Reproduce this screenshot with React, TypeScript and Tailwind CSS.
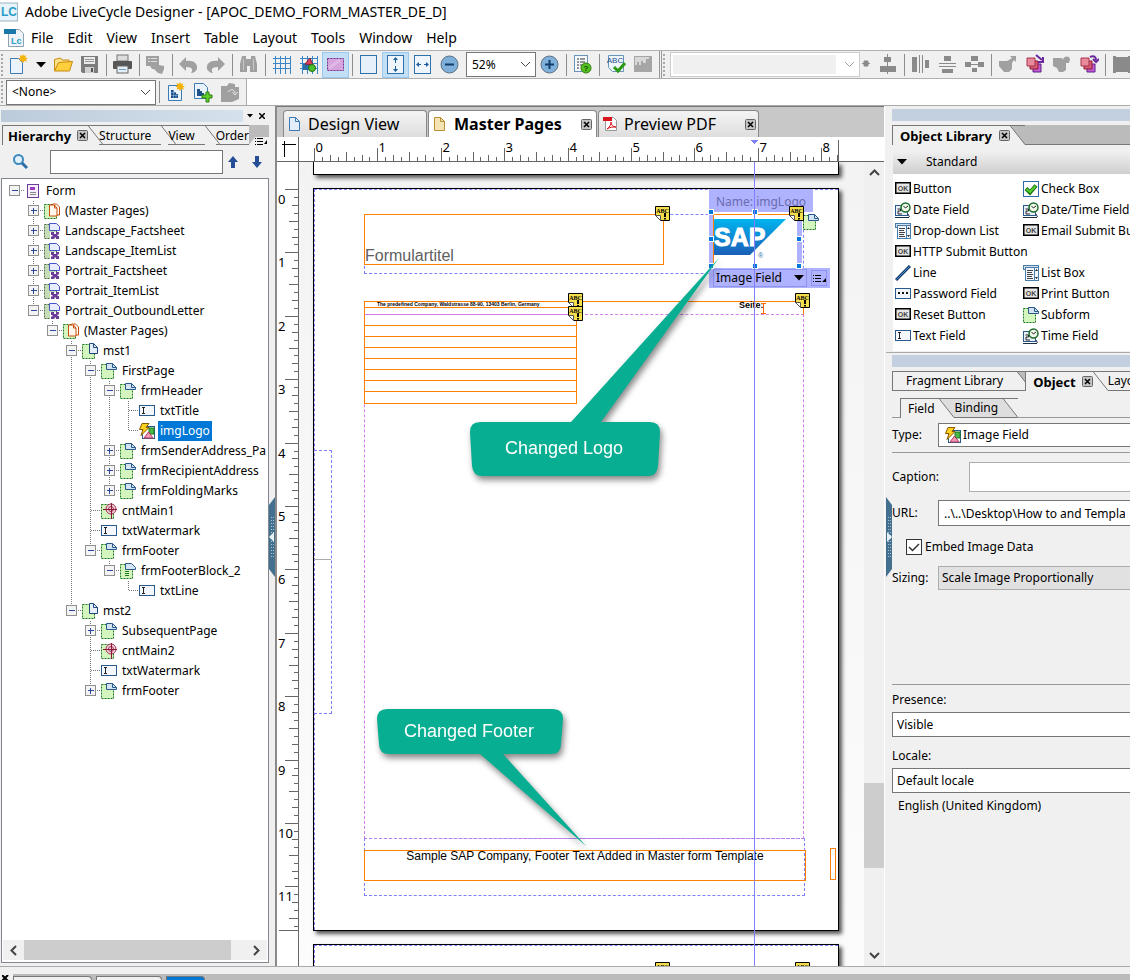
import type { ReactNode } from 'react';
import clsx from 'clsx';

type TreeNode = { name: string; icon: string; closed?: boolean; selected?: boolean; children?: TreeNode[] };

const tree: TreeNode[] = [
  {
    name: 'Form',
    icon: 'form',
    children: [
      { name: '(Master Pages)', icon: 'masters', closed: true },
      { name: 'Landscape_Factsheet', icon: 'flow', closed: true },
      { name: 'Landscape_ItemList', icon: 'flow', closed: true },
      { name: 'Portrait_Factsheet', icon: 'flow', closed: true },
      { name: 'Portrait_ItemList', icon: 'flow', closed: true },
      {
        name: 'Portrait_OutboundLetter',
        icon: 'flow',
        children: [
          {
            name: '(Master Pages)',
            icon: 'masters',
            children: [
              {
                name: 'mst1',
                icon: 'page',
                children: [
                  {
                    name: 'FirstPage',
                    icon: 'subform',
                    children: [
                      {
                        name: 'frmHeader',
                        icon: 'subform',
                        children: [
                          { name: 'txtTitle', icon: 'text' },
                          { name: 'imgLogo', icon: 'image', selected: true },
                        ],
                      },
                      { name: 'frmSenderAddress_Pa', icon: 'subform', closed: true },
                      { name: 'frmRecipientAddress', icon: 'subform', closed: true },
                      { name: 'frmFoldingMarks', icon: 'subform', closed: true },
                    ],
                  },
                  { name: 'cntMain1', icon: 'content' },
                  { name: 'txtWatermark', icon: 'text' },
                  {
                    name: 'frmFooter',
                    icon: 'subform',
                    children: [
                      {
                        name: 'frmFooterBlock_2',
                        icon: 'subformRows',
                        children: [{ name: 'txtLine', icon: 'text' }],
                      },
                    ],
                  },
                ],
              },
              {
                name: 'mst2',
                icon: 'page',
                children: [
                  { name: 'SubsequentPage', icon: 'subform', closed: true },
                  { name: 'cntMain2', icon: 'content' },
                  { name: 'txtWatermark', icon: 'text' },
                  { name: 'frmFooter', icon: 'subform', closed: true },
                ],
              },
            ],
          },
        ],
      },
    ],
  },
];

type Row = { node: TreeNode; guides: boolean[]; last: boolean };

function flatten(nodes: TreeNode[], guides: boolean[] = []): Row[] {
  return nodes.flatMap((node, i) => {
    const last = i === nodes.length - 1;
    return [{ node, guides, last }, ...flatten(node.children ?? [], [...guides, !last])];
  });
}

const library = [
  ['Button', 'ok'],
  ['Check Box', 'check'],
  ['Date Field', 'date'],
  ['Date/Time Field', 'date'],
  ['Drop-down List', 'list'],
  ['Email Submit Button', 'ok'],
  ['HTTP Submit Button', 'ok'],
  ['Line', 'line'],
  ['List Box', 'list'],
  ['Password Field', 'password'],
  ['Print Button', 'ok'],
  ['Reset Button', 'ok'],
  ['Subform', 'subform'],
  ['Text Field', 'text'],
  ['Time Field', 'date'],
];

const menus = ['File', 'Edit', 'View', 'Insert', 'Table', 'Layout', 'Tools', 'Window', 'Help'];

function Glyph({ name }: { name: string }) {
  return (
    <svg width="16" height="16" viewBox="0 0 16 16" className="shrink-0" fill="none">
      {glyphs[name]}
    </svg>
  );
}

const greenBox = (
  <rect x="0.5" y="1.5" width="12" height="14" fill="#d5f5bf" stroke="#1f7a1f" strokeDasharray="2 1" />
);
const bluePage = <path d="M5.500 .5h6l4 4v2h-10z" fill="#d3e3f3" stroke="#2a5a8c" />;

const glyphs: Record<string, ReactNode> = {
  form: (
    <>
      <rect x="2.5" y="1.5" width="11" height="13" fill="#f6effa" stroke="#6a3d96" />
      <rect x="5" y="4" width="5" height="3" fill="#9b3cc4" />
      <path d="M5 9.500h6M5 11.500h6" stroke="#888" />
    </>
  ),
  masters: (
    <>
      {greenBox}
      <path d="M8.500 1h4l3 3v8h-7z" fill="#fff" stroke="#c8500a" />
      <path d="M5.500 2h5l2.500 3v8h-7.500z" fill="#fff6ee" stroke="#c8500a" />
      <path d="M10.500 2v3h2.500" stroke="#c8500a" />
    </>
  ),
  flow: (
    <>
      <rect x="0.5" y="1.5" width="12" height="14" fill="#c5dcb6" stroke="#4c6a4c" strokeDasharray="2 1" />
      <path d="M5.500 .5h7l3 3v4h-10z" fill="#e8eeff" stroke="#4455c8" />
      <path d="M6 9h10v7H6z" fill="#fff" />
      <path d="M7 9h3v2h2V9h3v2.500h-1.500V13H15v3h-3v-1.500h-1.500V16H7v-2.500h1.500V12H7z" fill="#6b3c96" />
      <path d="M9 11h4v3H9z" fill="#6b3c96" />
    </>
  ),
  page: (
    <>
      {greenBox}
      <path d="M7.500 .5h4l4 4v6h-8z" fill="#e6eefa" stroke="#1f4a7c" />
      <path d="M11.500 .5v4h4" stroke="#1f4a7c" />
    </>
  ),
  subform: (
    <>
      {greenBox}
      {bluePage}
      <path d="M11.500 .5v4h4" stroke="#2a5a8c" />
    </>
  ),
  subformRows: (
    <>
      {greenBox}
      {bluePage}
      <path d="M5 8.500h4M5 10.500h4M5 12.500h4" stroke="#1f7a1f" />
    </>
  ),
  text: (
    <>
      <rect x="0.5" y="2.5" width="15" height="10" fill="#f4f8fc" stroke="#2a5a8c" />
      <path d="M4.500 4.500v6M3 4.500h3M3 10.500h3" stroke="#222" />
    </>
  ),
  image: (
    <>
      <rect x="3.5" y="3.5" width="12" height="12" fill="#fff" stroke="#2a5a8c" />
      <rect x="10" y="5" width="5" height="6" fill="#49b849" stroke="#1f7a1f" />
      <path d="M9.500 9l4.500 6H5z" fill="#f09ab4" stroke="#b33a5c" />
      <path d="M3 .5h7l-3 4h3l-8 8 2-6H.5z" fill="#ffd21f" stroke="#8a5a00" />
    </>
  ),
  content: (
    <>
      {greenBox}
      <circle cx="10" cy="6" r="5" fill="#f3d6de" stroke="#a03050" />
      <circle cx="10" cy="6" r="2.500" stroke="#a03050" />
      <path d="M10.500 0v16M2 6.500h14" stroke="#8a1838" />
    </>
  ),
  ok: (
    <>
      <rect x="0.75" y="1.75" width="14.500" height="10.500" fill="#e6e6e6" stroke="#000" strokeWidth="1.500" />
      <text x="8" y="10" textAnchor="middle" fontSize="7" fontWeight="bold" fill="#444" fontFamily="Liberation Sans, sans-serif">
        OK
      </text>
    </>
  ),
  check: (
    <>
      <rect x="0.5" y="0.5" width="15" height="15" fill="#fff" stroke="#2f6aa8" />
      <path d="M3 7.500l4 4 6-7" stroke="#176b10" strokeWidth="4" />
      <path d="M3.500 8l3.500 3 5.500-6" stroke="#55d02e" strokeWidth="2" />
    </>
  ),
  date: (
    <>
      <rect x="0.5" y="3.500" width="12" height="10" fill="#e8f1f8" stroke="#2a5a8c" />
      <path d="M0 15.500h14M13 12l1.500 3" stroke="#1b2f44" />
      <path d="M2.500 7h3v2H3v3h4" stroke="#222" />
      <circle cx="10.500" cy="5.500" r="4.500" fill="#eef7ea" stroke="#1f6a2c" strokeWidth="1.500" />
      <path d="M8.500 4l2 2 2.500-2" stroke="#222" />
    </>
  ),
  list: (
    <>
      <rect x="0.5" y="0.5" width="15" height="4" fill="#cfe0f0" stroke="#4a7cab" />
      <rect x="2.500" y="2.500" width="13" height="13" fill="#f1f6fb" stroke="#4a7cab" />
      <path d="M4 5.500h6M4 7.500h5M4 9.500h6M4 11.500h5M4 13.500h6" stroke="#444" />
      <path d="M11.500 2v13" stroke="#4a7cab" />
      <path d="M12 6l1.500-2L15 6zM12 12l1.500 2 1.500-2z" fill="#222" />
    </>
  ),
  line: (
    <>
      <path d="M1 15L15 1" stroke="#173a66" strokeWidth="3" />
      <path d="M1.500 14.500L14.500 1.500" stroke="#3f8fd6" />
    </>
  ),
  password: (
    <>
      <rect x="0.5" y="2.500" width="15" height="10" fill="#f1f6fb" stroke="#2a5a8c" />
      <path d="M3 6h2v2H3zM7 6h2v2H7zM11 6h2v2h-2z" fill="#111" />
    </>
  ),
};

const sun = <path d="M15 0l1 2 2-1-.5 2.500L20 4.500l-2 1 1 2-2.500-.5L15 9l-1-2-2.500.5 1-2-2-1 2-1-1-2.500 2.500 1z" fill="#f5b30a" />;

const tools: Record<string, ReactNode> = {
  newDoc: (
    <>
      <path d="M2.500 4.500h8l4 4v11h-12z" fill="#eaf2fb" stroke="#3b7ab5" />
      {sun}
    </>
  ),
  open: (
    <>
      <path d="M2.500 17V5.500l6-1.500 1.500 2h7v3" fill="#ffe48a" stroke="#c88a10" />
      <path d="M2.500 17l4-8.500 14-1-3 9.500z" fill="#ffcf3d" stroke="#c88a10" />
    </>
  ),
  save: (
    <>
      <path d="M2 2h17v17H3.500L2 17.500z" fill="#7c7c7c" />
      <rect x="5" y="3" width="11" height="7" fill="#e8e8e8" />
      <path d="M6 5.500h9M6 7.500h9" stroke="#999" />
      <rect x="6" y="13" width="9" height="6" fill="#d0d0d0" />
      <rect x="12" y="14" width="2" height="4" fill="#555" />
    </>
  ),
  print: (
    <>
      <rect x="5" y="1" width="11" height="6" fill="#dcdcdc" stroke="#777" />
      <rect x="1" y="7" width="19" height="8" rx="1" fill="#565656" />
      <rect x="5" y="12" width="11" height="7" fill="#e6eef5" stroke="#666" />
      <path d="M7 15.500h7" stroke="#6da0c8" />
    </>
  ),
  cut: (
    <>
      <path d="M1 2h13v9l5 1v3l-2 5-4-1-4-4H7l-2-3H1z" fill="#a0a0a0" />
      <path d="M3 4.500h2M6 4.500h6M3 7.500h2M6 7.500h6" stroke="#e0e0e0" />
    </>
  ),
  undo: <path d="M8 3v4c7-1 12 2 11 8-1 2-3 4-6 4 2-3 2-6-5-6v4L1 10z" fill="#a0a0a0" />,
  redo: <path d="M13 3v4C6 6 1 9 2 15c1 2 3 4 6 4-2-3-2-6 5-6v4l7-7z" fill="#a0a0a0" />,
  find: (
    <>
      <path d="M4 2h4v3h5V2h4l2 8v8h-7v-6H9v6H2v-8z" fill="#a0a0a0" />
      <path d="M5.500 5v11M15.500 5v11" stroke="#c8c8c8" />
    </>
  ),
  grid: <path d="M2 4.500h18M2 9.500h18M2 14.500h18M4.500 2v18M9.500 2v18M14.500 2v18M19.500 2v18" stroke="#3a86c4" />,
  gridShapes: (
    <>
      <path d="M2 4.500h18M2 9.500h18M2 14.500h18M4.500 2v18M9.500 2v18M14.500 2v18M19.500 2v18" stroke="#3a86c4" />
      <rect x="5" y="10" width="6" height="6" fill="#2d6ea8" />
      <path d="M12 4l3 7-8-1z" fill="#d8405c" stroke="#8c1c34" />
      <circle cx="14" cy="14" r="3.500" fill="#49c02c" stroke="#1c7010" />
    </>
  ),
  select: (
    <>
      <rect x="2.500" y="4.500" width="16" height="12" fill="#d6a4dc" stroke="#7a2a8c" strokeDasharray="2 1" />
      <path d="M4 14L15 6" stroke="#e0b8e6" strokeWidth="3" />
    </>
  ),
  page: <rect x="2.500" y="1.500" width="16" height="18" fill="#e6f0fa" stroke="#2f72ab" />,
  fitPage: (
    <>
      <rect x="2.500" y="1.500" width="16" height="18" fill="#eef5fc" stroke="#2f72ab" />
      <path d="M10.500 4v5M10.500 12v5" stroke="#1d5fa0" />
      <path d="M8 6l2.500-3L13 6zM8 15l2.500 3 2.500-3z" fill="#1d5fa0" />
    </>
  ),
  fitWidth: (
    <>
      <rect x="2.500" y="1.500" width="16" height="18" fill="#eef5fc" stroke="#2f72ab" />
      <path d="M5 10.500h4M12 10.500h4" stroke="#1d5fa0" />
      <path d="M7 8l-3 2.500L7 13zM14 8l3 2.500-3 2.500z" fill="#1d5fa0" />
    </>
  ),
  zoomOut: (
    <>
      <circle cx="10.500" cy="10.500" r="8.500" fill="#7fb0da" stroke="#5c6f80" />
      <path d="M6 10.500h9" stroke="#123d6b" strokeWidth="2" />
    </>
  ),
  zoomIn: (
    <>
      <circle cx="10.500" cy="10.500" r="8.500" fill="#7fb0da" stroke="#5c6f80" />
      <path d="M6 10.500h9M10.500 6v9" stroke="#123d6b" strokeWidth="2" />
    </>
  ),
  report: (
    <>
      <rect x="2.500" y="1.500" width="13" height="16" fill="#f4f8fc" stroke="#6a93b8" />
      <path d="M5 5h2M8 5h5M5 8h2M8 8h5M5 11h2M8 11h3M5 14h2" stroke="#333" />
      <circle cx="14" cy="14" r="5" fill="#55c01f" stroke="#2f7d10" />
      <text x="14" y="17" textAnchor="middle" fontSize="8" fontWeight="bold" fill="#0f4a08" fontFamily="Liberation Sans, sans-serif">
        ?
      </text>
    </>
  ),
  spell: (
    <>
      <path d="M3.500 1.500h15v16h-11l-4-4z" fill="#eef5fc" stroke="#6a93b8" />
      <text x="10" y="9" textAnchor="middle" fontSize="8" fill="#1d4f8a" fontFamily="Liberation Sans, sans-serif">
        ABC
      </text>
      <path d="M9 13l4 4 7-8" stroke="#2b9a12" strokeWidth="3" />
    </>
  ),
  chart: (
    <>
      <rect x="2" y="2" width="18" height="16" fill="#a6a6a6" />
      <path d="M3 3h14v2h-3v4h-3V7H9v4H7V8H5v3H3z" fill="#d8d8d8" />
    </>
  ),
  dot: <path d="M1 9.500h8M3 7h4v5H3z" fill="#8a8a8a" stroke="#8a8a8a" />,
  align: <path d="M7 3h7v5H7zM3 12h16v6H3zM10 0h1v20h-1z" fill="#8a8a8a" />,
  spreadH: <path d="M2 3h5v15H2zM9 1h1v18H9zM12 1h1v18h-1zM15 6h4v8h-4z" fill="#8a8a8a" />,
  spreadV: <path d="M7 2h7v5H7zM2 9h17v1H2zM2 12h17v1H2zM5 15h11v4H5z" fill="#8a8a8a" />,
  spreadC: <path d="M7 2h7v5H7zM1 8h6v5H1zM14 8h6v5h-6zM7 10h7v1H7zM8 14h5v4H8z" fill="#8a8a8a" />,
  group: <path d="M2 7h8l2-1 3-2-2-2h6v6l-2-2-2 3v6l-3 3H7l-5-6z" fill="#a0a0a0" />,
  layerBack: (
    <>
      <path d="M9 10h8v8H9z" fill="#c45ad8" stroke="#5c1f86" />
      <path d="M6 7h8v8H6z" fill="#d65a76" stroke="#8c1c34" />
      <path d="M3 4h8v8H3z" fill="#e88a9c" stroke="#a8324c" />
      <path d="M12 1l6 5M19 3v5h-5" stroke="#6a2a9c" strokeWidth="2" />
    </>
  ),
  layerFront: (
    <>
      <path d="M9 10h8v8H9z" fill="#c45ad8" stroke="#5c1f86" />
      <path d="M6 7h8v8H6z" fill="#d65a76" stroke="#8c1c34" />
      <path d="M3 4h8v8H3z" fill="#e88a9c" stroke="#a8324c" />
      <path d="M12 3c4-2 6 0 6 3M15 5l3 3 3-3" stroke="#6a2a9c" strokeWidth="2" />
    </>
  ),
  ungroup: <path d="M2 4h9l1 2c0-4 6-5 7-1l-1 4h-3v7l-3 2H8l-2-4-4-2z" fill="#a0a0a0" />,
  frame: <path d="M2 2h3v1h12V2h3v17h-3v-1H5v1H2z" fill="#8a8a8a" />,
  docGrid: (
    <>
      <path d="M3.500 3.500h9l4 4v11h-13z" fill="#eaf2fb" stroke="#3b7ab5" />
      <path d="M6 8h3v2h2v2h2v4H6z" fill="#1d4f8a" />
      <path d="M8.500 8v8M11 12v4M6 10.500h5M6 13.500h7" stroke="#a9c8e6" strokeWidth="0.500" />
      {sun}
    </>
  ),
  docAdd: (
    <>
      <path d="M2.500 1.500h9l4 4v11h-13z" fill="#eaf2fb" stroke="#3b7ab5" />
      <path d="M5 7h3v2h2v2h2v3H5z" fill="#1d4f8a" />
      <path d="M14 10h3v3h3v3h-3v4h-3v-4h-4v-3h4z" fill="#5fd02a" stroke="#2f7d10" />
    </>
  ),
  docUp: (
    <>
      <path d="M2 4h6l2-3 6 1v3h4v12l-7 3H2z" fill="#a0a0a0" />
      <path d="M9 10c3-4 7-2 7 1M13.500 10l2.500 3 2.500-3" stroke="#e8e8e8" />
    </>
  ),
};

function Tool({ name, on }: { name: string; on?: boolean }) {
  return (
    <button
      aria-label={name}
      className={clsx(
        'flex h-[26px] w-[27px] shrink-0 items-center justify-center',
        on && 'border border-[#99c9ef] bg-[#c2dff5]',
      )}
    >
      <svg width="21" height="21" viewBox="0 0 21 21" fill="none" className="shrink-0">
        {tools[name]}
      </svg>
    </button>
  );
}

function Sep() {
  return <span className="ml-[3px] mr-0.5 h-[22px] w-px shrink-0 bg-[#8c8c8c]" />;
}

function Grip() {
  return <span className="ml-px mr-0.5 h-[22px] w-[2px] shrink-0 border-l-2 border-dotted border-[#a8a8a8]" />;
}

function Chevron({ className }: { className?: string }) {
  return (
    <svg width="11" height="7" viewBox="0 0 11 7" fill="none" stroke="#444" className={clsx('pointer-events-none shrink-0', className)}>
      <path d="M1 1l4.500 4.500L10 1" />
    </svg>
  );
}

function Triangle() {
  return (
    <svg width="10" height="6" viewBox="0 0 10 6" className="shrink-0">
      <path d="M0 0h10L5 5.500z" fill="#000" />
    </svg>
  );
}

function CloseBox() {
  return (
    <svg width="11" height="11" viewBox="0 0 11 11" className="shrink-0">
      <rect x="0.5" y="0.5" width="10" height="10" rx="1" fill="#c4c4c4" stroke="#666" />
      <path d="M3 3l5 5M8 3L3 8" stroke="#000" strokeWidth="1.500" />
    </svg>
  );
}

function Slant({ behind }: { behind?: string }) {
  return (
    <svg width="15" height="20" viewBox="0 0 15 20" className="shrink-0">
      <path d="M0 0h15v20z" className={behind ?? 'fill-[#f0f0f0]'} />
      <path d="M0 .5l15 19M0 .5h15" fill="none" stroke="#777" />
    </svg>
  );
}

function Grab({ className, flip }: { className: string; flip?: boolean }) {
  return (
    <svg width="6" height="80" viewBox="0 0 6 80" className={clsx('absolute top-[391px]', className)}>
      <path d={flip ? 'M0 0l6 8v64l-6 8z' : 'M6 0L0 8v64l6 8z'} fill="#44708f" />
      <path d="M2.500 20v40M4.500 20v40" stroke="#a9c3d6" strokeDasharray="1 2" />
      <path d={flip ? 'M1 35v10l5-5z' : 'M5 35v10l-5-5z'} fill="#e6f0f7" />
    </svg>
  );
}

function Cell({ top, bottom, across, sign }: { top?: boolean; bottom?: boolean; across?: boolean; sign?: string }) {
  return (
    <svg width="19" height="20" viewBox="0 0 19 20" fill="none" className="shrink-0" shapeRendering="crispEdges">
      <g stroke="#777" strokeDasharray="1 1">
        {top && <path d="M9.500 0v10" />}
        {bottom && <path d="M9.500 10v10" />}
        {across && <path d="M9.500 9.500h10" />}
      </g>
      {sign && <rect x="4.500" y="4.500" width="10" height="10" fill="#f4f4f4" stroke="#8f8f8f" />}
      {sign && <path d={sign === '+' ? 'M6.500 9.500h6M9.500 6.500v6' : 'M6.500 9.500h6'} stroke="#2d4a9c" />}
    </svg>
  );
}

function TreeRow({ node, guides, last }: Row) {
  const sign = node.closed ? '+' : node.children ? '-' : undefined;
  return (
    <li className="flex h-5 items-center whitespace-nowrap">
      {guides.map((g, i) => (
        <Cell key={i} top={g} bottom={g} />
      ))}
      <Cell top={guides.length > 0} bottom={!last} across sign={sign} />
      <span className="ml-px flex">
        <Glyph name={node.icon} />
      </span>
      <span className={clsx('ml-[3px] px-0.5 leading-5', node.selected && 'bg-[#0078d7] text-white')}>{node.name}</span>
    </li>
  );
}

function Hierarchy() {
  return (
    <aside className="relative flex w-[277px] shrink-0 flex-col border-r-2 border-[#8a8a8a] pt-0.5">
      <div className="flex h-4 items-center">
        <div className="ml-px h-3 flex-1 bg-linear-to-r from-[#bccbdb] to-[#d5e1ec]" />
        <div className="flex w-8 items-center justify-center gap-1.5 pr-1.5">
          <svg width="6" height="4" viewBox="0 0 6 4">
            <path d="M0 0h6L3 3.500z" />
          </svg>
          <svg width="6" height="6" viewBox="0 0 6 6">
            <path d="M0 0l6 6M6 0L0 6" stroke="#000" strokeWidth="1.500" />
          </svg>
        </div>
      </div>
      <div className="mt-px flex h-5 pl-0.5 pr-1.5">
        <div className="flex min-w-0 flex-1 overflow-hidden">
          <button className="flex items-center gap-1.5 border-l border-t border-[#777] pl-[5px] text-[13px] font-bold">
            Hierarchy <CloseBox />
          </button>
          <Slant />
          <button className="-ml-1 border-y border-[#777] pr-2.5 pt-px">Structure</button>
          <Slant />
          <button className="-ml-2 border-y border-[#777] pr-2.5 pt-px">View</button>
          <Slant />
          <button className="-ml-1 border-y border-[#777] pt-px">Order</button>
        </div>
        <div className="flex w-5 shrink-0 items-end justify-end bg-[#bbb]">
          <svg width="20" height="9" viewBox="0 0 20 9">
            <path d="M0 9l6-8h14v8z" fill="#f0f0f0" />
            <path d="M6 2.500h1M6 5.500h1M6 8.500h1M8 2.500h6M8 5.500h6M8 8.500h6" stroke="#000" />
            <path d="M18 4v4h-3z" />
          </svg>
        </div>
      </div>
      <div className="flex h-[33px] items-center px-3">
        <svg width="17" height="17" viewBox="0 0 17 17" fill="none" className="shrink-0">
          <circle cx="6.500" cy="6.500" r="4.500" fill="#e3f1fa" stroke="#3c8abf" strokeWidth="2" />
          <path d="M10 10l5 5" stroke="#2d6ea8" strokeWidth="3" />
        </svg>
        <input aria-label="Search hierarchy" className="ml-[21px] h-6 w-0 flex-1 border border-[#767676] bg-white px-1" />
        <svg width="12" height="14" viewBox="0 0 12 14" className="ml-1">
          <path d="M6 1l5 6H8v6H4V7H1z" fill="#254e97" />
        </svg>
        <svg width="12" height="14" viewBox="0 0 12 14" className="ml-3">
          <path d="M6 13l5-6H8V1H4v6H1z" fill="#254e97" />
        </svg>
      </div>
      <div className="mb-[3px] ml-px mr-1.5 flex min-h-0 flex-1 flex-col border border-[#828790] bg-white pb-0.5">
        <ul className="min-h-0 flex-1 overflow-hidden pl-[3px] pt-0.5">
          {flatten(tree).map((row, i) => (
            <TreeRow key={i} {...row} />
          ))}
        </ul>
        <div className="mx-px flex h-5 items-center bg-[#f0f0f0]">
          <Chevron className="mx-[5px] rotate-90 stroke-2" />
          <div className="h-full flex-1 bg-[#cdcdcd]" />
          <Chevron className="ml-[20px] mr-[5px] -rotate-90 stroke-2" />
        </div>
      </div>
      <Grab className="right-0" />
    </aside>
  );
}

const INCH = 63.4;

function Ruler({ vertical, start, inches }: { vertical?: boolean; start: number; inches: number }) {
  const count = Math.floor(inches * 8);
  const ticks = Array.from({ length: count + 1 }, (_, i) => ({
    at: Math.round(start + (i * INCH) / 8) + 0.5,
    size: i % 8 === 0 ? 13 : i % 4 === 0 ? 9 : i % 2 === 0 ? 6 : 4,
    label: i % 8 === 0 ? i / 8 : null,
  }));
  const end = Math.round(start + inches * INCH) + 0.5;
  return (
    <svg className="h-full w-full" shapeRendering="crispEdges">
      {ticks.map((t) => (
        <g key={t.at}>
          <path d={vertical ? `M${21 - t.size} ${t.at}h${t.size}` : `M${t.at} ${24 - t.size}v${t.size}`} stroke="#666" />
          {t.label !== null && (
            <text x={vertical ? 1 : t.at + 1} y={vertical ? t.at + 14 : 15} fontSize="13">
              {t.label}
            </text>
          )}
        </g>
      ))}
      <path d={vertical ? `M2 ${end}h19` : `M${end} 3v21`} stroke="#666" />
      {!vertical && <path d="M452 3h7l-3.500 4z" fill="#8080ff" />}
    </svg>
  );
}

function Note({ className }: { className: string }) {
  return (
    <svg width="15" height="15" viewBox="0 0 15 15" className={clsx('absolute', className)}>
      <path d="M.5.5h14v14h-9l-5-5z" fill="#f4de4c" stroke="#000" />
      <path d="M.5 9.500h5v5z" fill="#fff" stroke="#555" />
      <text x="7.500" y="7" textAnchor="middle" fontSize="6" fontWeight="bold" fontFamily="Liberation Serif, serif">
        ABC
      </text>
      <path d="M9 7h2v4H9zM9 12h2v1.500H9z" />
    </svg>
  );
}

function Handle({ className }: { className: string }) {
  return <span className={clsx('absolute size-[6px] border border-white bg-[#0078d7]', className)} />;
}

function Sheet({ className, children }: { className: string; children?: ReactNode }) {
  return (
    <section className={clsx('relative w-[526px] shrink-0 border border-black bg-white shadow-[3px_3px_4px_#555]', className)}>
      {children}
    </section>
  );
}

function ImageSelection() {
  return (
    <>
      <div className="absolute left-[395px] top-0 h-[23px] w-[104px] bg-[#aeb2ff] pl-[7px] pt-1 leading-[18px] text-[#6c6cae]">
        Name: imgLogo
      </div>
      <div className="absolute left-[395px] top-[23px] h-[56px] w-[93px] border-x-[5px] border-[#aeb2ff] bg-white" />
      <div className="absolute left-[399px] top-[25px] h-[51px] w-[84px] border-l border-t border-[#ff8000]" />
      <svg width="76" height="42" viewBox="0 0 76 42" className="absolute left-[400px] top-[29px]">
        <defs>
          <linearGradient id="sap" x1="0" y1="0" x2="0" y2="1">
            <stop offset="0" stopColor="#00b5ef" />
            <stop offset="1" stopColor="#1c5fb8" />
          </linearGradient>
        </defs>
        <path d="M0 1h72L36 37H0z" fill="url(#sap)" />
        <text x="0" y="28" fontSize="25" fontWeight="bold" fill="#fff" stroke="#fff" fontFamily="Liberation Sans, sans-serif">
          SAP
        </text>
        <text x="44" y="40" fontSize="7" fill="#2d6ea8" fontFamily="Liberation Sans, sans-serif">
          ®
        </text>
      </svg>
      <Handle className="left-[394px] top-[20px]" />
      <Handle className="left-[438px] top-[20px]" />
      <Handle className="left-[394px] top-[47px]" />
      <Handle className="left-[482px] top-[47px]" />
      <div className="absolute left-[395px] top-[79px] flex h-[20px] w-[121px] items-center gap-1 bg-[#aeb2ff] pl-1">
        <button className="flex h-[18px] w-[94px] items-center justify-between border border-[#8f93f0] px-0.5">
          Image Field <Triangle />
        </button>
        <button aria-label="Field options" className="flex h-[16px] w-[16px] items-center justify-center border border-[#8f93f0]">
          <svg width="13" height="9" viewBox="0 0 13 9">
            <path d="M0 1.500h1M0 4.500h1M0 7.500h1M2 1.500h6M2 4.500h6M2 7.500h6" stroke="#000" />
            <path d="M13 4v4H9z" />
          </svg>
        </button>
      </div>
      <Handle className="left-[394px] top-[74px]" />
      <Handle className="left-[438px] top-[74px]" />
      <Handle className="left-[482px] top-[74px]" />
      <div className="absolute left-[489px] top-[25px]">
        <Glyph name="subform" />
      </div>
    </>
  );
}

function AddressLines() {
  return (
    <div className="absolute left-[50px] top-[125px] w-[213px] divide-y divide-[#ff8000] border border-[#ff8000] border-t-[#d080e8]">
      {Array.from({ length: 8 }, (_, i) => (
        <div key={i} className="h-[11px]" />
      ))}
    </div>
  );
}

type CalloutProps = {
  className: string;
  width: number;
  height: number;
  path: string;
  textX: number;
  textY: number;
  children: string;
};

function Callout({ className, width, height, path, textX, textY, children }: CalloutProps) {
  return (
    <svg width={width} height={height} className={clsx('absolute overflow-visible drop-shadow-[2px_4px_3px_#0007]', className)}>
      <path d={path} fill="#08ae92" />
      <text x={textX} y={textY} textAnchor="middle" fontSize="18" fill="#fff" fontFamily="Liberation Sans, sans-serif">
        {children}
      </text>
    </svg>
  );
}

function Canvas() {
  return (
    <div className="relative min-w-0 flex-1 overflow-hidden bg-linear-to-b from-[#f3f3f3] to-[#fcfcfc]">
      <div className="flex flex-col gap-[13px] pl-[14px]">
        <Sheet className="h-[13px] border-t-0" />
        <Sheet className="h-[743px]">
          <div className="absolute inset-0 border-l border-t border-dashed border-[#8080ff]" />
          <div className="absolute left-0 top-[261px] h-[264px] w-[18px] border border-l-0 border-dashed border-[#8080ff]">
            <div className="h-[109px] border-b border-[#aaa]" />
          </div>
          <div className="absolute left-[50px] top-[25px] h-[60px] w-[440px] border border-dashed border-[#8080ff]" />
          <div className="absolute left-[50px] top-[25px] flex h-[51px] w-[300px] items-end border border-[#ff8000] font-[Liberation_Sans,sans-serif] text-base leading-4 text-[#606060]">
            Formulartitel
          </div>
          <div className="absolute left-[50px] top-[125px] h-[525px] w-[440px] border border-dashed border-[#d080e8]" />
          <div className="absolute left-[50px] top-[112px] h-[14px] w-[440px] overflow-hidden border border-[#ff8000] border-b-transparent font-[Liberation_Sans,sans-serif] font-bold">
            <p className="h-[6px] w-[212px] border-b border-[#ff8000] pl-3 text-[5px] leading-[4px]">
              The predefined Company, Waldstrasse 88-90, 13403 Berlin, Germany
            </p>
          </div>
          <span className="absolute left-[425px] top-[112px] font-[Liberation_Sans,sans-serif] text-[9px] font-bold leading-[9px]">Seite:</span>
          <svg width="5" height="11" viewBox="0 0 5 11" className="absolute left-[447px] top-[114px]">
            <path d="M0 .5h5M2.500 0v11M0 10.500h5" stroke="#ff6a00" />
          </svg>
          <AddressLines />
          <Note className="left-[341px] top-[17px]" />
          <Note className="left-[254px] top-[104px]" />
          <Note className="left-[254px] top-[117px]" />
          <Note className="left-[481px] top-[104px]" />
          <ImageSelection />
          <Note className="left-[475px] top-[17px]" />
          <div className="absolute left-[50px] top-[649px] h-[58px] w-[441px] border border-dashed border-[#8080ff] border-t-[#b080f0]" />
          <div className="absolute left-[50px] top-[661px] h-[31px] w-[442px] border border-[#ff8000] text-center font-[Liberation_Sans,sans-serif] leading-[11px]">
            Sample SAP Company, Footer Text Added in Master form Template
          </div>
          <div className="absolute left-[516px] top-[659px] h-[32px] w-[6px] border border-[#ff8000]" />
        </Sheet>
        <Sheet className="h-[60px]">
          <div className="absolute inset-0 border-l border-t border-dashed border-[#8080ff]" />
          <Note className="left-[341px] top-[17px]" />
          <Note className="left-[481px] top-[17px]" />
        </Sheet>
      </div>
      <div className="absolute inset-y-0 left-[455px] w-px bg-[#8080ff]" />
      <Callout
        className="left-[171px] top-[96px]"
        width={250}
        height={219}
        path="M10 164h91L249 0 131 164h49q10 0 10 10l-2 34q-1 10-10 10H12q-9 0-10-10L0 174q0-10 10-10z"
        textX={94}
        textY={196}
      >
        Changed Logo
      </Callout>
      <Callout
        className="left-[78px] top-[547px]"
        width={210}
        height={138}
        path="M10 0h166q10 0 10 10l-2 25q0 10-10 10H126L209 137 103 45H12Q2 45 2 35L0 10Q0 0 10 0z"
        textX={92}
        textY={28}
      >
        Changed Footer
      </Callout>
    </div>
  );
}

const docIcon = (color: string, fill: string) => (
  <svg width="13" height="16" viewBox="0 0 13 16" className="shrink-0">
    <path d="M1.500 1.500h6l4 4v9h-10z" fill={fill} stroke={color} />
    <path d="M7.500 1.500v4h4" fill="none" stroke={color} />
  </svg>
);

function Editor() {
  return (
    <main className="flex min-w-0 flex-1 flex-col bg-white">
      <div className="flex h-[31px] items-end gap-px border-t border-[#777] bg-[#c8c8c8] pl-1.5 text-base">
        <button className="flex h-[27px] w-[144px] items-center gap-[7px] rounded-t border border-b-0 border-[#888] bg-linear-to-b from-[#f4f4f4] to-[#dedede] pl-1">
          {docIcon('#3b7ab5', '#e3eefa')} Design View
        </button>
        <button className="flex h-[27px] w-[169px] items-center gap-2 rounded-t border border-b-0 border-[#888] bg-white pl-1 font-bold">
          {docIcon('#b89030', '#f5e5b5')} Master Pages
          <span className="ml-auto mr-1">
            <CloseBox />
          </span>
        </button>
        <button className="flex h-[27px] w-[161px] items-center gap-1.5 rounded-t border border-b-0 border-[#888] bg-linear-to-b from-[#f4f4f4] to-[#dedede] pl-1">
          <svg width="15" height="16" viewBox="0 0 15 16" className="shrink-0">
            <path d="M2.500 1.500h8l3 3v10h-11z" fill="#fff" stroke="#999" />
            <path d="M0 1h9v4H0z" fill="#d8141c" />
            <path d="M4 13c3-2 4-5 4-7 0 3 2 5 5 5-4 0-6 0-9 2z" fill="none" stroke="#d8141c" />
          </svg>
          Preview PDF
          <span className="ml-auto mr-0.5">
            <CloseBox />
          </span>
        </button>
      </div>
      <div className="flex h-[25px] border-b border-[#666] bg-white">
        <div className="w-[22px] shrink-0 border-r border-[#666]">
          <svg width="21" height="24" viewBox="0 0 21 24" shapeRendering="crispEdges">
            <path d="M5 7.500h14M7.500 4v16" stroke="#000" />
          </svg>
        </div>
        <div className="min-w-0 flex-1">
          <Ruler start={15} inches={8.27} />
        </div>
      </div>
      <div className="flex min-h-0 flex-1">
        <div className="w-[22px] shrink-0 border-r border-[#666]">
          <Ruler vertical start={27} inches={11.68} />
        </div>
        <Canvas />
        <div className="flex w-5 shrink-0 flex-col items-center justify-between bg-[#f0f0f0] py-[7px]">
          <Chevron className="rotate-180 stroke-2" />
          <div className="mb-[84px] mt-auto h-[85px] w-full bg-[#cdcdcd]" />
          <Chevron className="stroke-2" />
        </div>
      </div>
    </main>
  );
}

function Library() {
  return (
    <>
      <div className="ml-[7px] mt-[3px] h-3 bg-[#c3d0df]" />
      <div className="ml-[7px] mt-1 flex h-5 bg-[#bbb]">
        <button className="flex items-center gap-[7px] border-l border-t border-[#777] bg-[#f0f0f0] pl-[7px] text-[13px] font-bold">
          Object Library <CloseBox />
        </button>
        <span className="flex bg-[#f0f0f0]">
          <Slant behind="fill-[#bbb]" />
        </span>
        <span className="flex-1 border-b border-[#777]" />
      </div>
      <div className="ml-2 mt-[5px] flex h-6 items-center gap-[19px] bg-linear-to-b from-[#f2f2f2] to-[#cfcfcf] pl-1">
        <Triangle /> Standard
      </div>
      <ul className="ml-2 grid grid-cols-[128px_1fr] bg-white pb-[5px] pl-0.5 pt-1">
        {library.map(([label, icon]) => (
          <li key={label} className={clsx('flex h-[21px] items-center gap-0.5 whitespace-nowrap', label.startsWith('HTTP') && 'col-span-2')}>
            <Glyph name={icon} />
            {label}
          </li>
        ))}
      </ul>
    </>
  );
}

function Field({ label, id, children, className }: { label: string; id: string; children: ReactNode; className?: string }) {
  return (
    <div className={clsx('flex items-center pl-[7px]', className)}>
      <label htmlFor={id} className="w-[46px] shrink-0 whitespace-nowrap">
        {label}
      </label>
      {children}
    </div>
  );
}

function ObjectPanel() {
  return (
    <>
      <div className="ml-px mt-px border-t border-[#aaa] pl-1.5 pt-0.5">
        <div className="h-3 bg-[#c3d0df]" />
      </div>
      <div className="ml-[7px] mt-1 flex h-5 bg-[#bbb]">
        <button className="shrink-0 whitespace-nowrap border-y border-l border-[#777] bg-[#f0f0f0] pl-[13px] pr-[14px]">Fragment Library</button>
        <span className="flex w-2 shrink-0 overflow-hidden border-b border-[#777] bg-[#f0f0f0]">
          <Slant behind="fill-[#bbb]" />
        </span>
        <button className="flex shrink-0 items-center gap-1.5 border-l border-t border-[#777] bg-[#f0f0f0] pl-[7px] text-[13px] font-bold">
          Object <CloseBox />
        </button>
        <span className="flex shrink-0 bg-[#f0f0f0]">
          <Slant />
        </span>
        <button className="w-0 flex-1 border-y border-[#777] bg-[#f0f0f0] text-left">Layout</button>
      </div>
      <div className="ml-[7px] mt-[7px] flex h-5">
        <span className="w-2 border-b border-[#999]" />
        <button className="border-l border-t border-[#777] pl-[7px] pr-1">Field</button>
        <Slant behind="fill-[#dedede]" />
        <button className="border-y border-[#777] bg-[#dedede] pl-px pr-[5px]">Binding</button>
        <span className="flex border-b border-[#777] bg-[#dedede]">
          <Slant />
        </span>
        <span className="flex-1 border-b border-[#999]" />
      </div>
      <Field label="Type:" id="type" className="mt-[5px]">
        <div className="flex h-6 flex-1 items-center gap-0.5 border border-r-0 border-[#767676] bg-white pl-1.5">
          <Glyph name="image" />
          <select id="type" className="w-0 flex-1 appearance-none outline-none">
            <option>Image Field</option>
          </select>
        </div>
      </Field>
      <div className="ml-[7px] mt-[5px] border-t border-[#999]" />
      <Field label="Caption:" id="caption" className="mt-[9px]">
        <textarea id="caption" className="ml-[31px] h-[30px] w-0 flex-1 resize-none border border-r-0 border-[#abadb3] bg-white" />
      </Field>
      <Field label="URL:" id="url" className="mt-2">
        <input
          id="url"
          defaultValue="..\..\Desktop\How to and Templates"
          className="h-[26px] w-0 flex-1 border border-r-0 border-[#767676] bg-white px-[5px]"
        />
      </Field>
      <label className="mt-3 flex h-[18px] items-center gap-[3px] pl-[21px]">
        <span className="grid size-4">
          <input type="checkbox" defaultChecked className="col-start-1 row-start-1 size-4 appearance-none border border-[#333] bg-white" />
          <svg viewBox="0 0 16 16" fill="none" className="pointer-events-none col-start-1 row-start-1 size-4">
            <path d="M3 8l3.500 3.500L13 5" stroke="#333" strokeWidth="1.500" />
          </svg>
        </span>
        Embed Image Data
      </label>
      <Field label="Sizing:" id="sizing" className="mt-2.5">
        <select id="sizing" className="h-6 w-0 flex-1 appearance-none border border-r-0 border-[#adadad] bg-[#e1e1e1] px-[3px]">
          <option>Scale Image Proportionally</option>
        </select>
      </Field>
      <div className="ml-[7px] mt-[94px] border-t border-[#999]" />
      <div className="flex flex-col pl-[7px] pt-1.5">
        <label htmlFor="presence">Presence:</label>
        <select id="presence" className="mb-2.5 mt-[3px] h-[25px] appearance-none border border-r-0 border-[#767676] bg-white px-1">
          <option>Visible</option>
        </select>
        <label htmlFor="locale">Locale:</label>
        <select id="locale" className="mt-[3px] h-[25px] appearance-none border border-r-0 border-[#767676] bg-white px-1">
          <option>Default locale</option>
        </select>
        <p className="pl-1.5 pt-1">English (United Kingdom)</p>
      </div>
    </>
  );
}

function Toolbars() {
  return (
    <>
      <div className="flex h-[29px] items-center overflow-hidden border-y border-[#b0b0b0] bg-[#f0f0f0]">
        <Grip />
        <Tool name="newDoc" />
        <button aria-label="New from list" className="flex w-[17px] shrink-0 justify-center">
          <Triangle />
        </button>
        <Tool name="open" />
        <Tool name="save" />
        <Sep />
        <Tool name="print" />
        <Sep />
        <Tool name="cut" />
        <Sep />
        <Tool name="undo" />
        <Tool name="redo" />
        <Sep />
        <Tool name="find" />
        <Sep />
        <Tool name="grid" />
        <Tool name="gridShapes" />
        <Tool name="select" on />
        <Sep />
        <Tool name="page" />
        <Tool name="fitPage" on />
        <Tool name="fitWidth" />
        <Tool name="zoomOut" />
        <div className="ml-[3px] flex h-[25px] w-[70px] shrink-0 items-center border border-[#767676] bg-white pr-1">
          <select aria-label="Zoom" className="w-0 flex-1 appearance-none pl-[5px]">
            <option>52%</option>
          </select>
          <Chevron />
        </div>
        <Tool name="zoomIn" />
        <Sep />
        <Tool name="report" />
        <Sep />
        <Tool name="spell" />
        <Tool name="chart" />
        <span className="ml-[3px] h-full w-[3px] shrink-0 border-x border-[#999]" />
        <span className="w-0.5" />
        <Grip />
        <div className="ml-[3px] flex h-[25px] w-[190px] shrink-0 items-center border border-[#ccc] bg-white pl-0.5 pr-1">
          <select aria-label="Style" disabled className="h-[19px] w-0 flex-1 appearance-none bg-[#f0f0f0]" />
          <Chevron className="ml-2 opacity-50" />
        </div>
        <svg width="14" height="21" viewBox="0 0 12 21" className="shrink-0">
          {tools.dot}
        </svg>
        <Tool name="align" />
        <Sep />
        <Tool name="spreadH" />
        <Tool name="spreadV" />
        <Tool name="spreadC" />
        <Sep />
        <Tool name="group" />
        <Tool name="layerBack" />
        <Tool name="ungroup" />
        <Tool name="layerFront" />
        <Sep />
        <Tool name="frame" />
      </div>
      <div className="flex h-[27px] items-center border-b border-[#aaa] bg-white">
        <div className="flex h-full items-center border-r border-[#aaa] bg-[#f0f0f0] pr-[3px]">
          <Grip />
          <div className="ml-px flex h-[25px] w-[150px] items-center border border-[#767676] bg-white pr-1">
            <select aria-label="Style sheet" className="w-0 flex-1 appearance-none pl-[5px]">
              <option>&lt;None&gt;</option>
            </select>
            <Chevron />
          </div>
          <Sep />
          <Tool name="docGrid" />
          <Tool name="docAdd" />
          <Tool name="docUp" />
        </div>
      </div>
    </>
  );
}

function App() {
  return (
    <div className="flex h-screen flex-col overflow-hidden bg-[#f0f0f0] font-['Noto_Sans','Open_Sans',sans-serif] text-[12px] leading-[18px] text-black">
      <header className="bg-white text-[14px]">
        <div className="flex h-6 items-center gap-[7px]">
          <svg width="18" height="20" viewBox="0 0 18 20" className="shrink-0">
            <rect x="-2" y="1" width="19.500" height="18" fill="#e8f4fb" stroke="#9cb4c2" />
            <text x="1" y="14" fontSize="12" fontWeight="bold" fill="#2d9cc8" fontFamily="Liberation Sans, sans-serif">
              LC
            </text>
          </svg>
          <h1>Adobe LiveCycle Designer - [APOC_DEMO_FORM_MASTER_DE_D]</h1>
        </div>
        <nav className="flex h-[26px] items-center gap-[14px] pl-1 pt-0.5">
          <svg width="20" height="20" viewBox="0 0 20 20" className="-mr-[7px] shrink-0">
            <path d="M4.500 1.500h11l4 4v13h-15z" fill="#eef4f8" stroke="#8ea3b0" />
            <path d="M0 1h12v5H0z" fill="#1879a8" />
            <text x="7" y="16" fontSize="9" fontWeight="bold" fill="#2d9cc8" fontFamily="Liberation Sans, sans-serif">
              Lc
            </text>
          </svg>
          {menus.map((menu) => (
            <button key={menu}>{menu}</button>
          ))}
        </nav>
      </header>
      <Toolbars />
      <div className="flex min-h-0 flex-1 overflow-hidden">
        <Hierarchy />
        <Editor />
        <aside className="relative w-[246px] shrink-0 overflow-hidden border-l border-white">
          <Library />
          <ObjectPanel />
          <Grab className="left-px" flip />
        </aside>
      </div>
      <footer className="flex h-[14px] shrink-0 items-end border-t border-[#aaa] pl-0.5">
        <svg width="11" height="5" viewBox="0 0 11 5" className="shrink-0">
          <path d="M0 0l6 6M6 0L0 6" stroke="#000" strokeWidth="2" />
        </svg>
        <div className="flex h-1.5 flex-1 items-end gap-1 bg-[#bbb]">
          <span className="h-1 w-[79px] rounded-tr border border-b-0 border-[#777] bg-[#f0f0f0]" />
          <span className="h-1 w-[66px] rounded-tr border border-b-0 border-[#777] bg-[#f0f0f0]" />
          <span className="h-1 w-[39px] rounded-tr border border-b-0 border-[#777] bg-[#0078d7]" />
        </div>
      </footer>
    </div>
  );
}

export default App;
